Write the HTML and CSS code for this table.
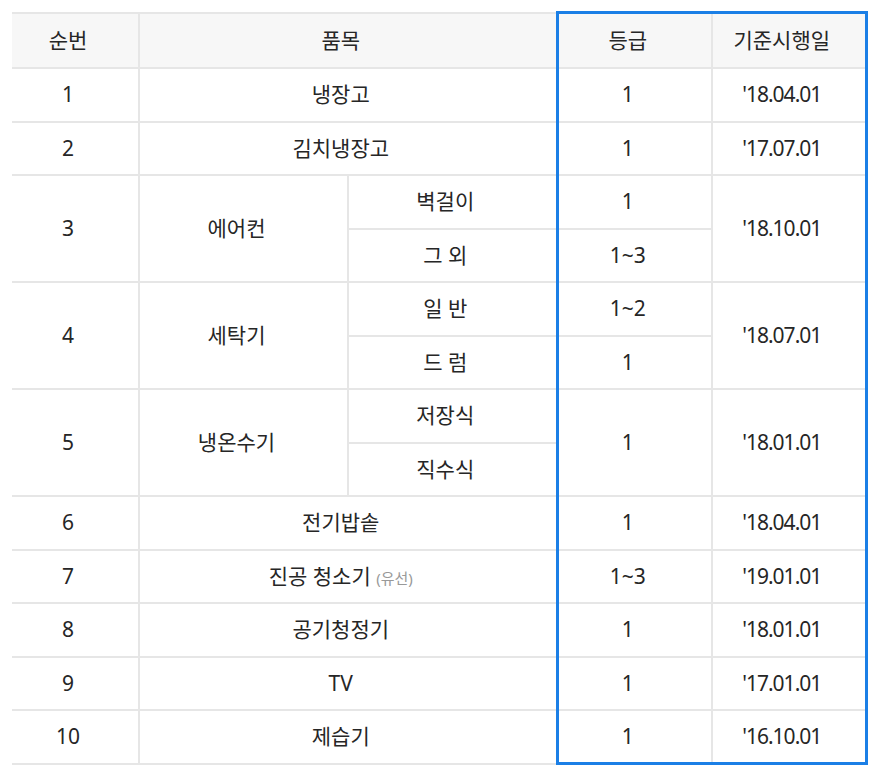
FILE: index.html
```html
<!DOCTYPE html>
<html lang="ko">
<head>
<meta charset="utf-8">
<title>에너지소비효율등급</title>
<link rel="stylesheet" href="styles.css">
</head>
<body>
<table class="grade-table">
  <colgroup>
    <col class="c-no">
    <col class="c-item">
    <col class="c-sub">
    <col class="c-grade">
    <col class="c-date">
  </colgroup>
  <thead>
    <tr>
      <th>순번</th>
      <th colspan="2">품목</th>
      <th class="g">등급</th>
      <th class="d">기준시행일</th>
    </tr>
  </thead>
  <tbody>
    <tr>
      <td>1</td>
      <td colspan="2">냉장고</td>
      <td class="g">1</td>
      <td class="d">'18.04.01</td>
    </tr>
    <tr>
      <td>2</td>
      <td colspan="2">김치냉장고</td>
      <td class="g">1</td>
      <td class="d">'17.07.01</td>
    </tr>
    <tr>
      <td rowspan="2">3</td>
      <td rowspan="2">에어컨</td>
      <td>벽걸이</td>
      <td class="g">1</td>
      <td class="d" rowspan="2">'18.10.01</td>
    </tr>
    <tr>
      <td>그 외</td>
      <td class="g">1~3</td>
    </tr>
    <tr>
      <td rowspan="2">4</td>
      <td rowspan="2">세탁기</td>
      <td>일 반</td>
      <td class="g">1~2</td>
      <td class="d" rowspan="2">'18.07.01</td>
    </tr>
    <tr>
      <td>드 럼</td>
      <td class="g">1</td>
    </tr>
    <tr>
      <td rowspan="2">5</td>
      <td rowspan="2">냉온수기</td>
      <td>저장식</td>
      <td class="g" rowspan="2">1</td>
      <td class="d" rowspan="2">'18.01.01</td>
    </tr>
    <tr>
      <td>직수식</td>
    </tr>
    <tr>
      <td>6</td>
      <td colspan="2">전기밥솥</td>
      <td class="g">1</td>
      <td class="d">'18.04.01</td>
    </tr>
    <tr>
      <td>7</td>
      <td colspan="2">진공 청소기 <span class="note">(유선)</span></td>
      <td class="g">1~3</td>
      <td class="d">'19.01.01</td>
    </tr>
    <tr>
      <td>8</td>
      <td colspan="2">공기청정기</td>
      <td class="g">1</td>
      <td class="d">'18.01.01</td>
    </tr>
    <tr>
      <td>9</td>
      <td colspan="2">TV</td>
      <td class="g">1</td>
      <td class="d">'17.01.01</td>
    </tr>
    <tr class="last">
      <td>10</td>
      <td colspan="2">제습기</td>
      <td class="g">1</td>
      <td class="d">'16.10.01</td>
    </tr>
  </tbody>
</table>
</body>
</html>
```
FILE: styles.css
```css
html, body {
  margin: 0;
  padding: 0;
  background: #ffffff;
}
body {
  padding: 11px 0 0 12px;
  font-family: "Noto Sans", "Noto Sans CJK KR", sans-serif;
  color: #262626;
}
.grade-table {
  border-collapse: collapse;
  table-layout: fixed;
  width: 854px;
  font-size: 21px;
  border-top: 2px solid #cfcfcf;
  border-bottom: 2px solid #dcdcdc;
}
.c-no { width: 127px; }
.c-item { width: 209px; }
.c-sub { width: 209px; }
.c-grade { width: 155px; }
.c-date { width: 154px; }

.grade-table th,
.grade-table td {
  border: 2px solid #e6e6e6;
  padding: 0 14px 0 0;
  text-align: center;
  vertical-align: middle;
  line-height: 1;
}
.grade-table tr > :first-child { border-left: none; }
.grade-table th {
  font-weight: normal;
  background: #f7f7f7;
  height: 53px;
}
.grade-table tbody tr { height: 53.5px; }
.grade-table td.d { letter-spacing: -1px; }

.grade-table .g { border-left: 3px solid #1b7fe6; }
.grade-table .d { border-right: 3px solid #1b7fe6; }
.grade-table th.g,
.grade-table th.d { border-top: 3px solid #1b7fe6; }
.grade-table tr.last .g,
.grade-table tr.last .d { border-bottom: 3px solid #1b7fe6; }

.note {
  font-size: 15px;
  color: #999999;
}
```
